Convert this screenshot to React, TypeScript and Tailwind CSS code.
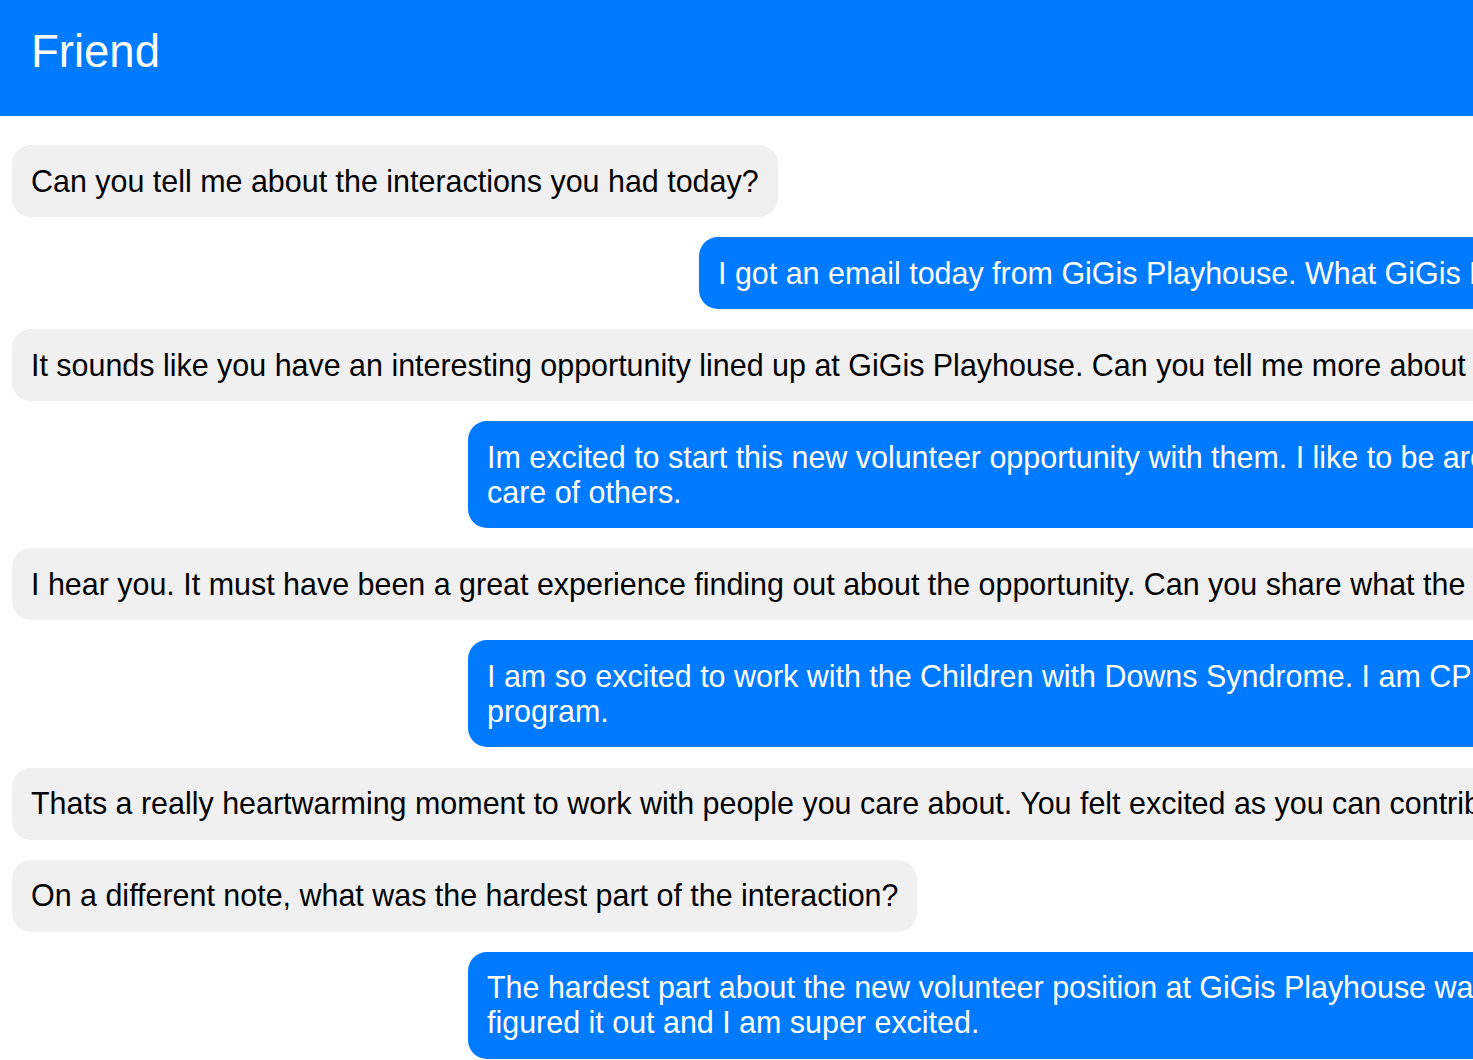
import React from "react";

type Msg = { from: "bot" | "user"; lines: string[]; w?: string };

const messages: Msg[] = [
  { from: "bot", lines: ["Can you tell me about the interactions you had today?"] },
  {
    from: "user",
    w: "w-[1689px]",
    lines: ["I got an email today from GiGis Playhouse. What GiGis Playhouse does is help children with Down syndrome."],
  },
  {
    from: "bot",
    lines: ["It sounds like you have an interesting opportunity lined up at GiGis Playhouse. Can you tell me more about it?"],
  },
  {
    from: "user",
    w: "w-[1920px]",
    lines: [
      "Im excited to start this new volunteer opportunity with them. I like to be around children and take",
      "care of others.",
    ],
  },
  {
    from: "bot",
    lines: [
      "I hear you. It must have been a great experience finding out about the opportunity. Can you share what the experience was like?",
    ],
  },
  {
    from: "user",
    w: "w-[1920px]",
    lines: [
      "I am so excited to work with the Children with Downs Syndrome. I am CPR certified and ready to help with the",
      "program.",
    ],
  },
  {
    from: "bot",
    lines: [
      "Thats a really heartwarming moment to work with people you care about. You felt excited as you can contribute to the community.",
    ],
  },
  { from: "bot", lines: ["On a different note, what was the hardest part of the interaction?"] },
  {
    from: "user",
    w: "w-[1920px]",
    lines: [
      "The hardest part about the new volunteer position at GiGis Playhouse was the paperwork, but I",
      "figured it out and I am super excited.",
    ],
  },
];

export default function App() {
  return (
    <div
      className="h-screen w-full overflow-hidden bg-white"
      style={{ fontFamily: '"Liberation Sans", Arial, Helvetica, sans-serif' }}
    >
      <header className="h-[116px] bg-[#007bff] pl-[31px] pt-[26px]">
        <h1 className="text-[45.5px] font-normal leading-[52px] text-white">Friend</h1>
      </header>
      <div className="flex w-[2400px] flex-col gap-[20.1px] px-[12px] pt-[29px]">
        {messages.map((m, i) => (
          <div
            key={i}
            className={
              m.from === "bot"
                ? "self-start whitespace-nowrap rounded-[19px] bg-[#f0f0f0] px-[19px] py-[18.5px] text-[30.45px] leading-[35px] text-black"
                : `self-end overflow-hidden whitespace-nowrap rounded-[19px] bg-[#007bff] px-[19px] py-[18.5px] text-[30.45px] leading-[35px] text-white ${m.w ?? ""}`
            }
          >
            {m.lines.map((l, j) => (
              <div key={j}>{l}</div>
            ))}
          </div>
        ))}
      </div>
    </div>
  );
}
